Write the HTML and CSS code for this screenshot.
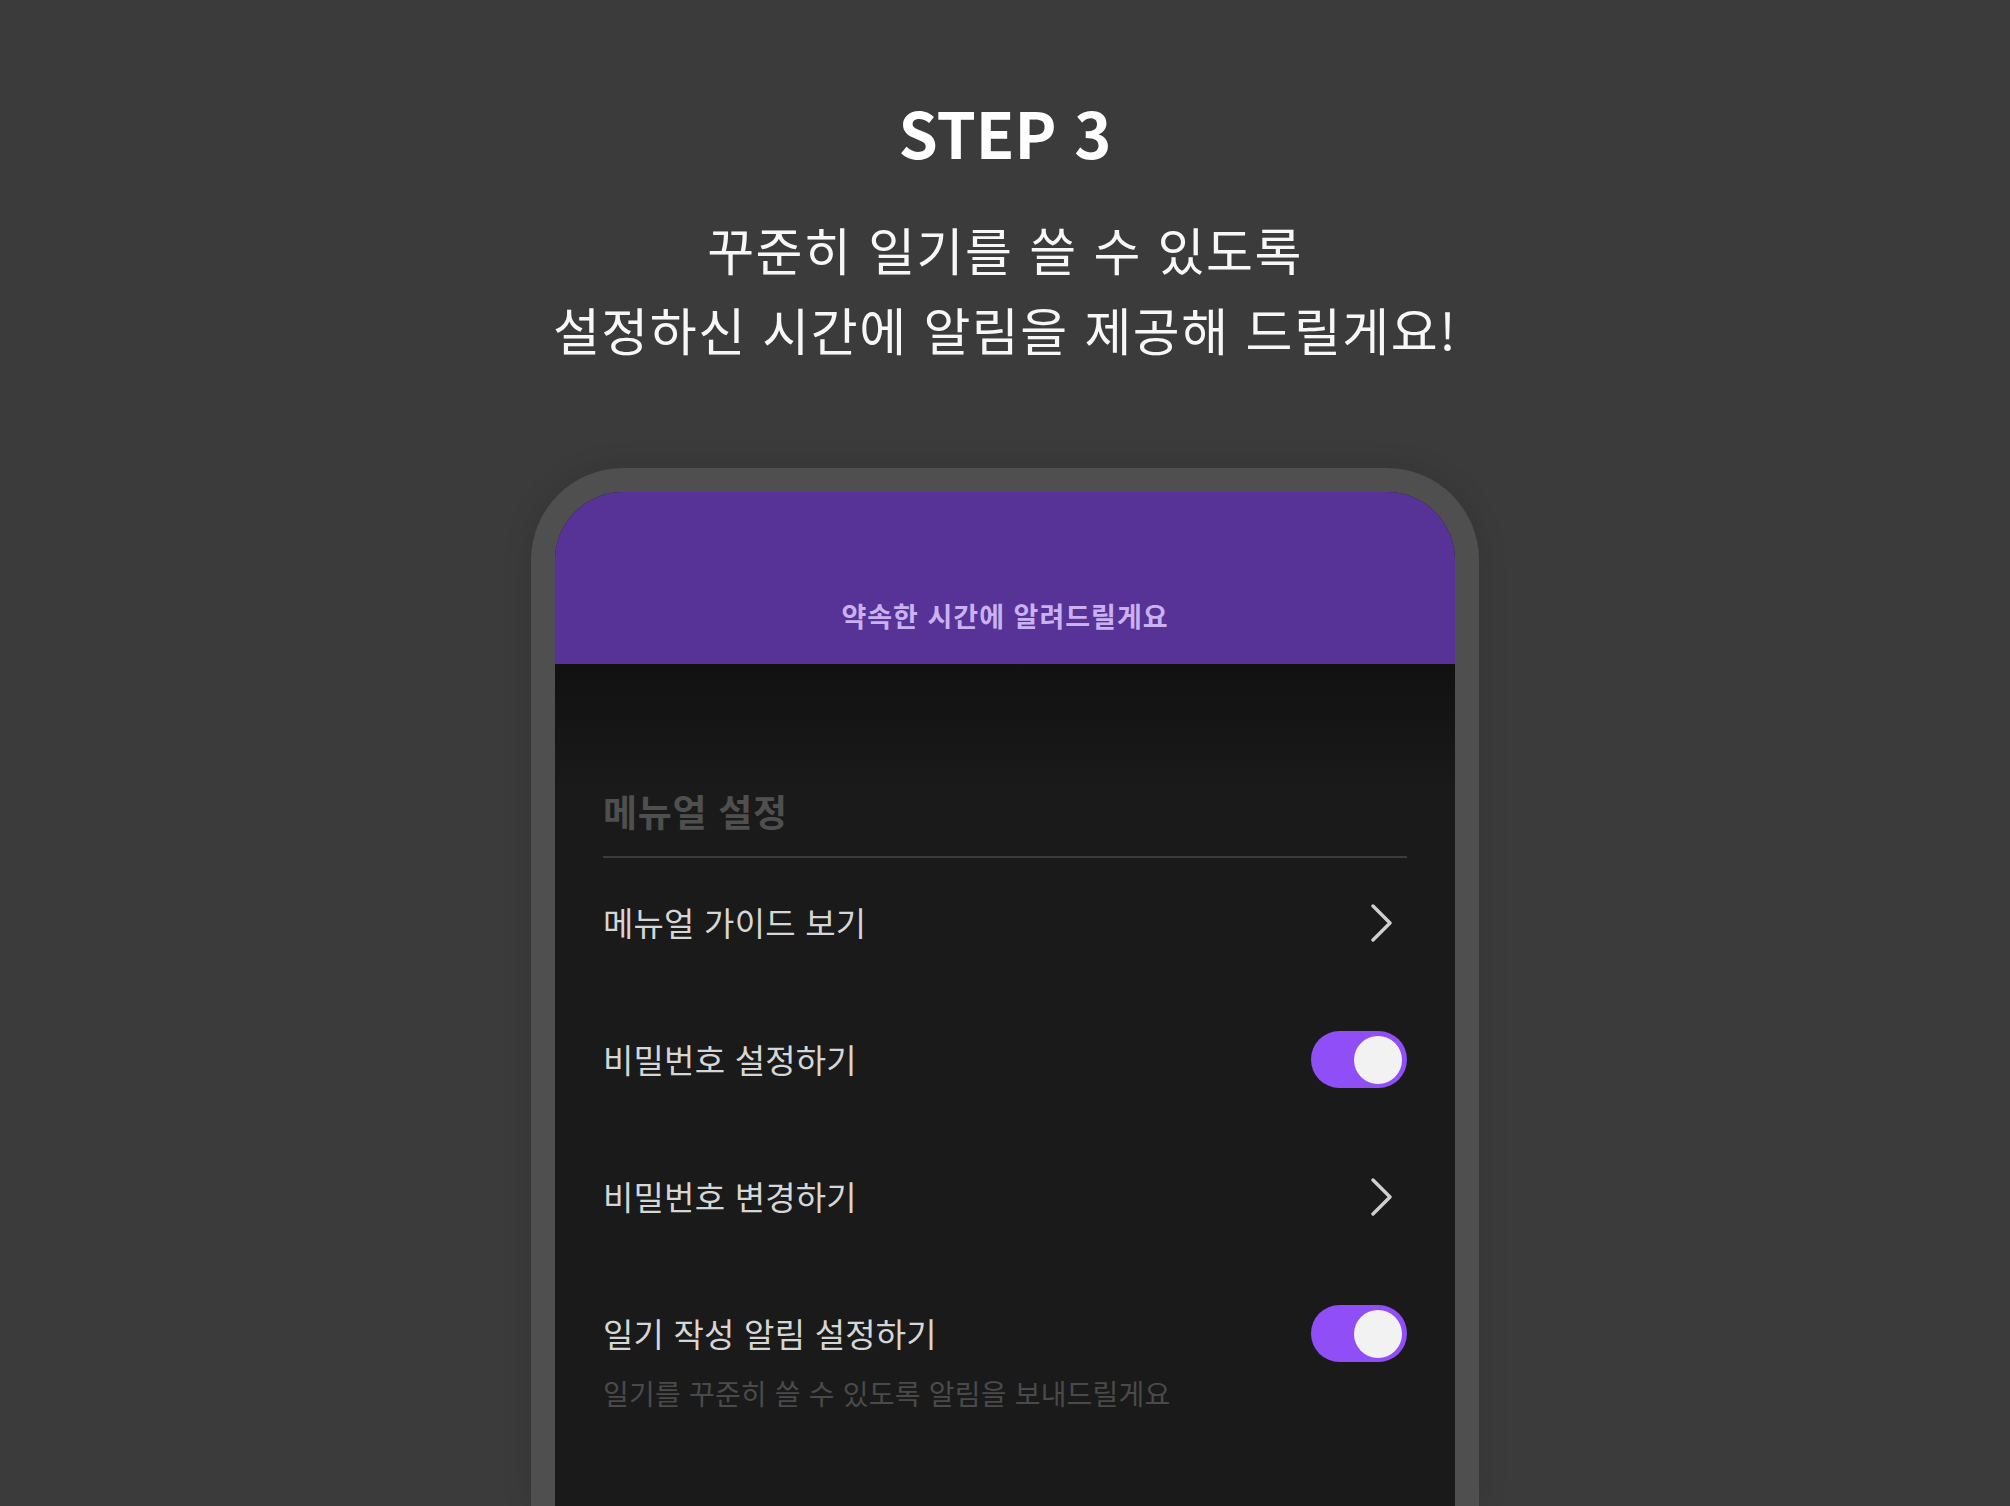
FILE: index.html
```html
<!DOCTYPE html>
<html lang="ko">
<head>
    <meta charset="UTF-8">
    <meta name="viewport" content="width=device-width, initial-scale=1.0">
    <title>STEP 3</title>
    <link rel="stylesheet" href="styles.css">
</head>
<body>
    <section class="intro">
        <h1 class="step">STEP 3</h1>
        <p class="lead">꾸준히 일기를 쓸 수 있도록<br>설정하신 시간에 알림을 제공해 드릴게요!</p>
    </section>

    <div class="phone">
        <div class="screen">
            <div class="app-bar">
                <span class="app-bar-title">약속한 시간에 알려드릴게요</span>
            </div>
            <div class="settings">
                <h2 class="section-title">메뉴얼 설정</h2>
                <ul class="setting-list">
                    <li class="setting">
                        <span class="setting-label">메뉴얼 가이드 보기</span>
                        <svg class="chevron" width="24" height="38" viewBox="0 0 24 38">
                            <path d="M3 2 L20 19 L3 36" fill="none" stroke="#cfcfcf" stroke-width="3.4" stroke-linecap="round" stroke-linejoin="round"/>
                        </svg>
                    </li>
                    <li class="setting">
                        <span class="setting-label">비밀번호 설정하기</span>
                        <span class="toggle on"><span class="knob"></span></span>
                    </li>
                    <li class="setting">
                        <span class="setting-label">비밀번호 변경하기</span>
                        <svg class="chevron" width="24" height="38" viewBox="0 0 24 38">
                            <path d="M3 2 L20 19 L3 36" fill="none" stroke="#cfcfcf" stroke-width="3.4" stroke-linecap="round" stroke-linejoin="round"/>
                        </svg>
                    </li>
                    <li class="setting setting-top">
                        <div class="setting-text">
                            <span class="setting-label">일기 작성 알림 설정하기</span>
                            <span class="setting-desc">일기를 꾸준히 쓸 수 있도록 알림을 보내드릴게요</span>
                        </div>
                        <span class="toggle on"><span class="knob"></span></span>
                    </li>
                </ul>
            </div>
        </div>
    </div>
</body>
</html>
```

FILE: styles.css
```css
html, body {
    height: 100%;
}
body {
    margin: 0;
    height: 1506px;
    overflow: hidden;
    background-color: #3b3b3b;
    font-family: "Noto Sans CJK KR", "Noto Sans", sans-serif;
    color: #fff;
    display: flex;
    flex-direction: column;
    align-items: center;
}
.intro {
    text-align: center;
    padding-top: 100px;
}
.step {
    margin: 0;
    font-size: 63px;
    line-height: 63px;
    font-weight: 700;
}
.lead {
    margin: 46px 0 0;
    font-size: 51px;
    line-height: 80px;
    font-weight: 400;
    letter-spacing: 1.5px;
    color: #f7f7f7;
}
.phone {
    margin-top: 99px;
    width: 900px;
    border: 24px solid #4f4f4f;
    border-bottom: none;
    border-radius: 92px 92px 0 0;
    background-color: #4f4f4f;
    box-shadow: 0 0 30px rgba(0, 0, 0, 0.12);
    flex: 1;
}
.screen {
    height: 100%;
    border-radius: 68px 68px 0 0;
    overflow: hidden;
    background-color: #1a1a1a;
}
.app-bar {
    height: 172px;
    box-sizing: border-box;
    padding-top: 104px;
    background-color: #573398;
    text-align: center;
}
.app-bar-title {
    font-size: 27px;
    line-height: 40px;
    font-weight: 700;
    letter-spacing: 1px;
    color: #c9b2f2;
}
.settings {
    padding: 0 48px;
    background: linear-gradient(#111111 0, #1a1a1a 130px);
}
.section-title {
    margin: 0;
    padding-top: 122px;
    padding-bottom: 20px;
    border-bottom: 2px solid #3c3c3c;
    font-size: 37px;
    line-height: 50px;
    font-weight: 700;
    letter-spacing: 0.7px;
    color: #4f4f4f;
}
.setting-list {
    list-style: none;
    margin: -4px 0 0;
    padding: 0;
}
.setting {
    height: 137px;
    display: flex;
    align-items: center;
    justify-content: space-between;
}
.setting-top {
    align-items: flex-start;
    padding-top: 40px;
    box-sizing: border-box;
    height: 200px;
}
.setting-text {
    display: flex;
    flex-direction: column;
}
.setting-label {
    font-size: 33px;
    line-height: 57px;
    letter-spacing: 0.2px;
    color: #d6d6d6;
}
.setting-desc {
    margin-top: 11px;
    font-size: 28px;
    line-height: 40px;
    letter-spacing: 0.2px;
    color: #4a4a4a;
}
.chevron {
    margin-right: 13px;
}
.toggle {
    width: 96px;
    height: 57px;
    border-radius: 29px;
    background-color: #8f4ef6;
    display: flex;
    align-items: center;
    justify-content: flex-end;
    padding: 0 5px;
    box-sizing: border-box;
}
.knob {
    width: 48px;
    height: 48px;
    border-radius: 50%;
    background-color: #f2f2f2;
}
```
